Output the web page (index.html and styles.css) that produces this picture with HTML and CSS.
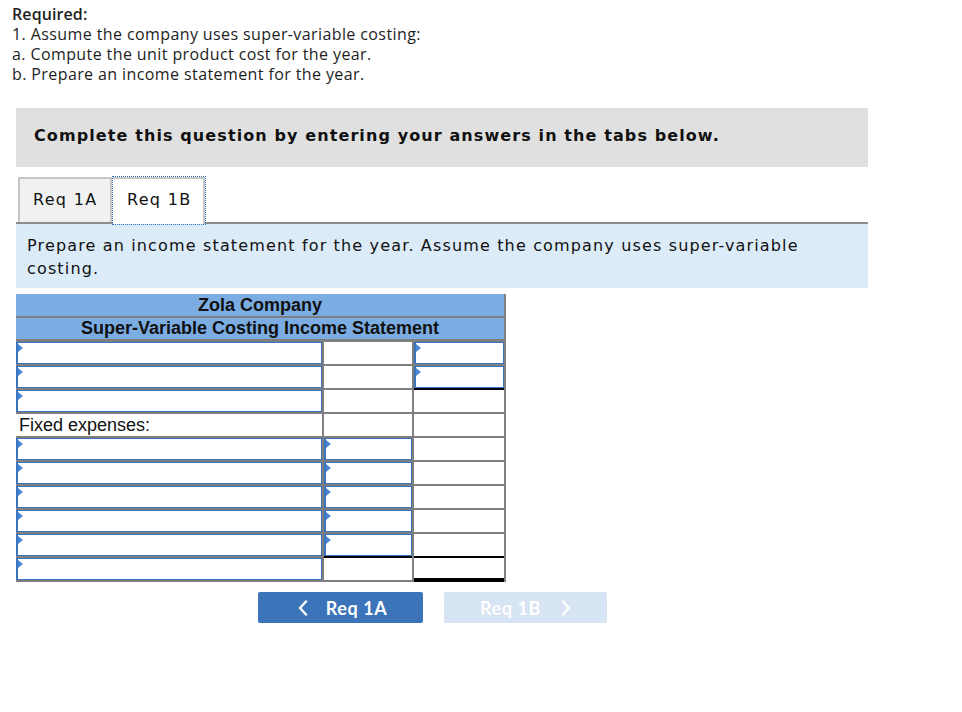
FILE: index.html
```html
<!DOCTYPE html>
<html>
<head>
<meta charset="utf-8">
<link rel="stylesheet" href="styles.css">
</head>
<body>
<div class="page">
  <div class="required">
    <div class="req-title">Required:</div>
    <div>1. Assume the company uses super-variable costing:</div>
    <div>a. Compute the unit product cost for the year.</div>
    <div>b. Prepare an income statement for the year.</div>
  </div>
  <div class="main">
    <div class="banner">Complete this question by entering your answers in the tabs below.</div>
    <div class="tabs">
      <div class="tab">Req 1A</div>
      <div class="tab active">Req 1B</div>
    </div>
    <div class="prompt">Prepare an income statement for the year. Assume the company uses super-variable costing.</div>
    <div class="sheet">
      <div class="head h1">Zola Company</div>
      <div class="head h2">Super-Variable Costing Income Statement</div>

      <div class="cell inp"></div><div class="cell"></div><div class="cell inp"></div>
      <div class="cell inp"></div><div class="cell"></div><div class="cell inp ul"></div>
      <div class="cell inp"></div><div class="cell"></div><div class="cell"></div>
      <div class="cell label">Fixed expenses:</div><div class="cell"></div><div class="cell"></div>
      <div class="cell inp"></div><div class="cell inp"></div><div class="cell"></div>
      <div class="cell inp"></div><div class="cell inp"></div><div class="cell"></div>
      <div class="cell inp"></div><div class="cell inp"></div><div class="cell"></div>
      <div class="cell inp"></div><div class="cell inp"></div><div class="cell"></div>
      <div class="cell inp"></div><div class="cell inp ul"></div><div class="cell ul"></div>
      <div class="cell inp"></div><div class="cell"></div><div class="cell dbl"></div>
    </div>
    <div class="nav">
      <div class="btn prev">
        <svg class="chev" width="10" height="16" viewBox="0 0 10 16"><polyline points="8,1.5 2,8 8,14.5" fill="none" stroke="#ffffff" stroke-width="2.4" stroke-linecap="round" stroke-linejoin="round"/></svg>
        <span>Req 1A</span>
      </div>
      <div class="btn next">
        <span>Req 1B</span>
        <svg class="chev" width="10" height="16" viewBox="0 0 10 16"><polyline points="2,1.5 8,8 2,14.5" fill="none" stroke="#ffffff" stroke-width="2.4" stroke-linecap="round" stroke-linejoin="round"/></svg>
      </div>
    </div>
  </div>
</div>
</body>
</html>
```

FILE: styles.css
```css
html, body {
  margin: 0;
  padding: 0;
  background: #ffffff;
}
.page {
  padding-top: 4px;
}
.required {
  margin-left: 12px;
  font-family: "Open Sans", "Lato", sans-serif;
  font-size: 16px;
  letter-spacing: 0.4px;
  line-height: 20px;
  color: #1e1e1e;
}
.req-title {
  font-weight: 600;
  letter-spacing: 0.1px;
}
.main {
  margin-left: 16px;
  width: 852px;
}
.banner {
  margin-top: 24px;
  background: #e0e0e0;
  height: 59px;
  box-sizing: border-box;
  padding: 0 0 5px 18px;
  display: flex;
  align-items: center;
  font-family: "DejaVu Sans", Verdana, sans-serif;
  font-weight: bold;
  font-size: 16px;
  letter-spacing: 1.1px;
  color: #111;
}
.tabs {
  margin-top: 10px;
  display: flex;
  padding-left: 2px;
  border-bottom: 2px solid #8c8c8c;
}
.tab {
  height: 45px;
  box-sizing: border-box;
  border: 2px solid #c6c6c6;
  border-bottom: none;
  background: #f1f1f1;
  font-family: "DejaVu Sans", Verdana, sans-serif;
  font-size: 16px;
  letter-spacing: 1.3px;
  white-space: nowrap;
  color: #111;
  display: flex;
  align-items: center;
  padding: 0 0 2px 13px;
  width: 94px;
  flex: none;
}
.tab.active {
  background: #ffffff;
  border-left: none;
  width: 92px;
  margin-left: 1px;
  height: 47px;
  margin-bottom: -2px;
  padding-left: 14px;
  padding-bottom: 4px;
  outline: 1px dotted #2f6fc0;
  outline-offset: 0;
}
.prompt {
  background: #dcebf8;
  height: 64px;
  box-sizing: border-box;
  padding: 10px 11px 0 11px;
  font-family: "DejaVu Sans", Verdana, sans-serif;
  font-size: 16px;
  letter-spacing: 1.15px;
  line-height: 23px;
  color: #111;
}
.sheet {
  margin-top: 6px;
  width: 490px;
  box-sizing: border-box;
  display: grid;
  grid-template-columns: 306px 88px 90px;
  column-gap: 2px;
  row-gap: 2px;
  grid-auto-rows: 22px;
  background: #7f7f7f;
  padding: 0 2px 2px 0;
  font-family: "Liberation Sans", Arial, sans-serif;
}
.head {
  grid-column: 1 / -1;
  background: #7badE3;
  color: #111;
  font-weight: bold;
  font-size: 18px;
  text-align: center;
  line-height: 22px;
}
.head.h2 {
  height: 21px;
  line-height: 21px;
}
.cell {
  background: #ffffff;
  box-sizing: border-box;
}
.label {
  font-size: 18px;
  line-height: 22px;
  padding-left: 3px;
  color: #111;
}
.inp {
  border: 1px solid #3a74c1;
  border-left-width: 2px;
}
.inp::before {
  content: "";
  display: block;
  width: 0;
  height: 0;
  margin: 1px 0 0 0;
  border-left: 5px solid #4a86d2;
  border-top: 4px solid transparent;
  border-bottom: 4px solid transparent;
}
.ul {
  box-shadow: 0 2px 0 0 #000000;
}
.dbl {
  box-shadow: inset 0 -2px 0 0 #000000, 0 2px 0 0 #000000;
}
.nav {
  margin-top: 10px;
  margin-left: 242px;
  display: flex;
  gap: 21px;
}
.btn {
  width: 165px;
  height: 31px;
  border-radius: 2px;
  display: flex;
  align-items: center;
  justify-content: center;
  gap: 18px;
  font-family: "Lato", "Open Sans", sans-serif;
  font-weight: bold;
  font-size: 18px;
  letter-spacing: 0.6px;
  color: #ffffff;
}
.btn.prev {
  background: #3b74b8;
  padding-left: 4px;
  box-sizing: border-box;
}
.btn.next {
  background: #d7e4f3;
  width: 163px;
  gap: 20px;
}
.chev {
  display: block;
}
```
